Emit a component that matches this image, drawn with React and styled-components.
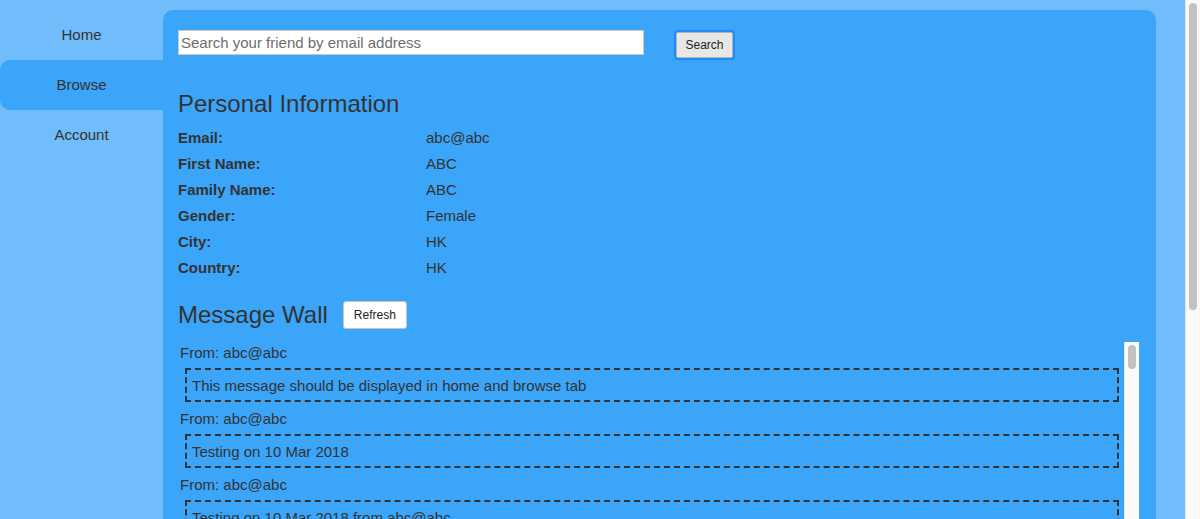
import React from "react";
import styled, { createGlobalStyle } from "styled-components";

const GlobalStyle = createGlobalStyle`
  body {
    margin: 0;
    background: #71bcfa;
    font-family: "Liberation Sans", Arial, Helvetica, sans-serif;
    font-size: 15px;
    color: #333;
  }
`;

const Track = styled.div`
  box-sizing: border-box;
  width: 15px;
  flex-shrink: 0;
  background: #fafafa;
  border-left: 1px solid #e6e6e6;
  padding: 3px;
`;

const Thumb = styled.div`
  width: 8px;
  height: ${(props) => props.$size}px;
  background: #c2c2c2;
  border-radius: 4px;
`;

const PageTrack = styled(Track)`
  position: fixed;
  top: 0;
  right: 0;
  bottom: 0;
`;

// 전체 레이아웃 (사이드바 + 패널)
const Layout = styled.div`
  display: flex;
  align-items: flex-start;
  padding: 10px 15px 10px 0;
`;

const Sidebar = styled.nav`
  width: 163px;
  flex-shrink: 0;
  display: flex;
  flex-direction: column;
`;

const NavItem = styled.div`
  height: 50px;
  display: flex;
  align-items: center;
  justify-content: center;
  font-size: 15px;
  color: #333;
  cursor: pointer;
  padding-bottom: 1px;
  box-sizing: border-box;
  background: ${(props) => (props.$active ? "#3ba5f9" : "transparent")};
  border-radius: 10px 0 0 10px;
`;

// 메인 패널
const Panel = styled.main`
  flex: 1;
  margin-right: 29px;
  background: #3ba5f9;
  border-radius: 10px;
  padding: 20px 17px 15px 15px;
`;

const SearchRow = styled.div`
  display: flex;
  align-items: flex-start;
`;

const SearchInput = styled.input`
  box-sizing: border-box;
  width: 466px;
  height: 25px;
  margin: 0;
  padding: 0 2px;
  border: 1px solid #c9c9c9;
  background: #fff;
  font-family: inherit;
  font-size: 15px;
  color: #333;
  outline: none;

  &::placeholder {
    color: #6e6e6e;
  }
`;

const SearchButton = styled.button`
  box-sizing: border-box;
  margin: 2px 0 2px 32px;
  width: 57px;
  height: 26px;
  padding: 0;
  background: #e7e7e7;
  border: 1px solid #b4b4b4;
  border-radius: 2px;
  box-shadow: 0 0 0 2px #1f8cf8;
  font-family: inherit;
  font-size: 12px;
  color: #222;
`;

const SectionTitle = styled.h2`
  margin: 0;
  font-size: 24px;
  font-weight: normal;
  line-height: 28px;
  color: #333;
`;

const InfoBlock = styled.section`
  margin-top: 30px;
`;

const InfoTable = styled.div`
  margin-top: 7px;
  display: grid;
  grid-template-columns: 248px 1fr;
  line-height: 26px;
`;

const Label = styled.div`
  font-weight: bold;
`;

const Value = styled.div``;

const WallHeader = styled.div`
  margin-top: 20px;
  display: flex;
  align-items: center;
`;

const RefreshButton = styled.button`
  box-sizing: border-box;
  margin-left: 15px;
  width: 64px;
  height: 28px;
  padding: 0;
  background: #fff;
  border: 1px solid #c4c4c4;
  border-radius: 3px;
  font-family: inherit;
  font-size: 12px;
  color: #222;
`;

// 메시지 목록 (스크롤 영역)
const Wall = styled.div`
  margin-top: 13px;
  height: 500px;
  display: flex;
`;

const MessageList = styled.div`
  flex: 1;
  overflow: hidden;
  padding-left: 2px;
`;

const From = styled.div`
  padding-top: 1px;
  line-height: 19px;
`;

const MessageBox = styled.div`
  margin: 6px 5px;
  padding: 7px 5px 5px;
  border: 2px dashed #333;
  line-height: 18px;
`;

const profile = [
  ["Email:", "abc@abc"],
  ["First Name:", "ABC"],
  ["Family Name:", "ABC"],
  ["Gender:", "Female"],
  ["City:", "HK"],
  ["Country:", "HK"],
];

const messages = [
  { from: "abc@abc", text: "This message should be displayed in home and browse tab" },
  { from: "abc@abc", text: "Testing on 10 Mar 2018" },
  { from: "abc@abc", text: "Testing on 10 Mar 2018 from abc@abc" },
];

export default function App() {
  return (
    <>
      <GlobalStyle />
      <Layout>
        <Sidebar>
          <NavItem>Home</NavItem>
          <NavItem $active>Browse</NavItem>
          <NavItem>Account</NavItem>
        </Sidebar>
        <Panel>
          <SearchRow>
            <SearchInput placeholder="Search your friend by email address" />
            <SearchButton>Search</SearchButton>
          </SearchRow>

          <InfoBlock>
            <SectionTitle>Personal Information</SectionTitle>
            <InfoTable>
              {profile.map(([label, value]) => (
                <React.Fragment key={label}>
                  <Label>{label}</Label>
                  <Value>{value}</Value>
                </React.Fragment>
              ))}
            </InfoTable>
          </InfoBlock>

          <WallHeader>
            <SectionTitle>Message Wall</SectionTitle>
            <RefreshButton>Refresh</RefreshButton>
          </WallHeader>
          <Wall>
            <MessageList>
              {messages.map((m, i) => (
                <div key={i}>
                  <From>From: {m.from}</From>
                  <MessageBox>{m.text}</MessageBox>
                </div>
              ))}
            </MessageList>
            <Track>
              <Thumb $size={24} />
            </Track>
          </Wall>
        </Panel>
      </Layout>
      <PageTrack>
        <Thumb $size={307} />
      </PageTrack>
    </>
  );
}
